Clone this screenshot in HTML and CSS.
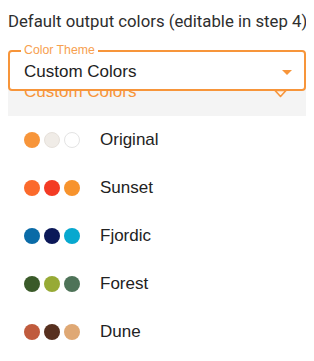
FILE: index.html
```html
<!DOCTYPE html>
<html>
<head>
<meta charset="utf-8">
<link rel="stylesheet" href="styles.css">
</head>
<body>
<p class="heading">Default output colors (editable in step 4)</p>
<div class="field">
  <div class="select">
    <span class="select-label">Color Theme</span>
    <span class="select-value">Custom Colors</span>
    <svg class="select-arrow" width="10" height="5" viewBox="0 0 10 5"><polygon points="0,0 10,0 5,5" fill="#f7953a"/></svg>
    <svg class="pointer" width="13" height="8" viewBox="0 0 13 8"><polygon points="1,0.5 12,0.5 6.5,6.5" fill="#fdf3ea" stroke="#f7953a" stroke-width="1.6" stroke-linejoin="round"/></svg>
  </div>
  <ul class="menu">
    <li class="item item-current">Custom Colors</li>
    <li class="item">
      <span class="dots"><span class="dot c-or"></span><span class="dot c-beige"></span><span class="dot c-white"></span></span>
      <span class="name">Original</span>
    </li>
    <li class="item">
      <span class="dots"><span class="dot c-s1"></span><span class="dot c-s2"></span><span class="dot c-s3"></span></span>
      <span class="name">Sunset</span>
    </li>
    <li class="item">
      <span class="dots"><span class="dot c-f1"></span><span class="dot c-f2"></span><span class="dot c-f3"></span></span>
      <span class="name">Fjordic</span>
    </li>
    <li class="item">
      <span class="dots"><span class="dot c-g1"></span><span class="dot c-g2"></span><span class="dot c-g3"></span></span>
      <span class="name">Forest</span>
    </li>
    <li class="item">
      <span class="dots"><span class="dot c-d1"></span><span class="dot c-d2"></span><span class="dot c-d3"></span></span>
      <span class="name">Dune</span>
    </li>
  </ul>
</div>
</body>
</html>
```
FILE: styles.css
```css
html, body {
  background: #ffffff;
}
body {
  margin: 8px;
  font-family: "Liberation Sans", Arial, sans-serif;
  height: 345px;
}
.heading {
  margin: 0;
  padding-top: 3px;
  font-family: Roboto, "Liberation Sans", sans-serif;
  font-size: 16.75px;
  line-height: 20px;
  color: #2e2e2e;
  white-space: nowrap;
}
.field {
  margin-top: 19px;
}
.select {
  position: relative;
  z-index: 2;
  height: 37px;
  border: 2px solid #f7953a;
  border-radius: 4px;
  background: #ffffff;
  display: flex;
  align-items: center;
  padding: 0 12px 0 14px;
}
.select-label {
  position: absolute;
  left: 11px;
  top: -9px;
  padding: 0 3px;
  background: #ffffff;
  color: #f7a04f;
  font-size: 12.3px;
  line-height: 14px;
}
.select-value {
  flex: 1;
  font-size: 17px;
  color: #1e1e1e;
  padding-top: 3px;
}
.select-arrow {
  display: block;
  margin-top: 3px;
}
.pointer {
  position: absolute;
  left: 264px;
  top: 38px;
}
.menu {
  position: relative;
  z-index: 1;
  margin: -23px -1px 0 0;
  padding: 0;
  list-style: none;
  background: #ffffff;
  box-shadow: 0 5px 5px -3px rgba(0,0,0,0.2), 0 8px 10px 1px rgba(0,0,0,0.14), 0 3px 14px 2px rgba(0,0,0,0.12);
  height: 293px;
}
.item {
  height: 48px;
  display: flex;
  align-items: center;
  gap: 20px;
  padding-left: 16px;
  font-size: 17px;
  color: #222222;
}
.item-current {
  background: #f4f4f4;
  color: #f7953a;
}
.dots {
  display: flex;
  gap: 4px;
}
.dot {
  width: 16px;
  height: 16px;
  border-radius: 50%;
  box-sizing: border-box;
}
.c-or { background: #f7953a; }
.c-beige { background: #f0ece7; border: 1px solid #e6e1db; }
.c-white { background: #ffffff; border: 1px solid #e4e4e4; }
.c-s1 { background: #fb6a2c; }
.c-s2 { background: #f33b24; }
.c-s3 { background: #f7932d; }
.c-f1 { background: #0a6ba7; }
.c-f2 { background: #0b1858; }
.c-f3 { background: #07a8cf; }
.c-g1 { background: #3a5a29; }
.c-g2 { background: #97aa35; }
.c-g3 { background: #4e7358; }
.c-d1 { background: #c05b3d; }
.c-d2 { background: #57301f; }
.c-d3 { background: #dfa874; }
```
